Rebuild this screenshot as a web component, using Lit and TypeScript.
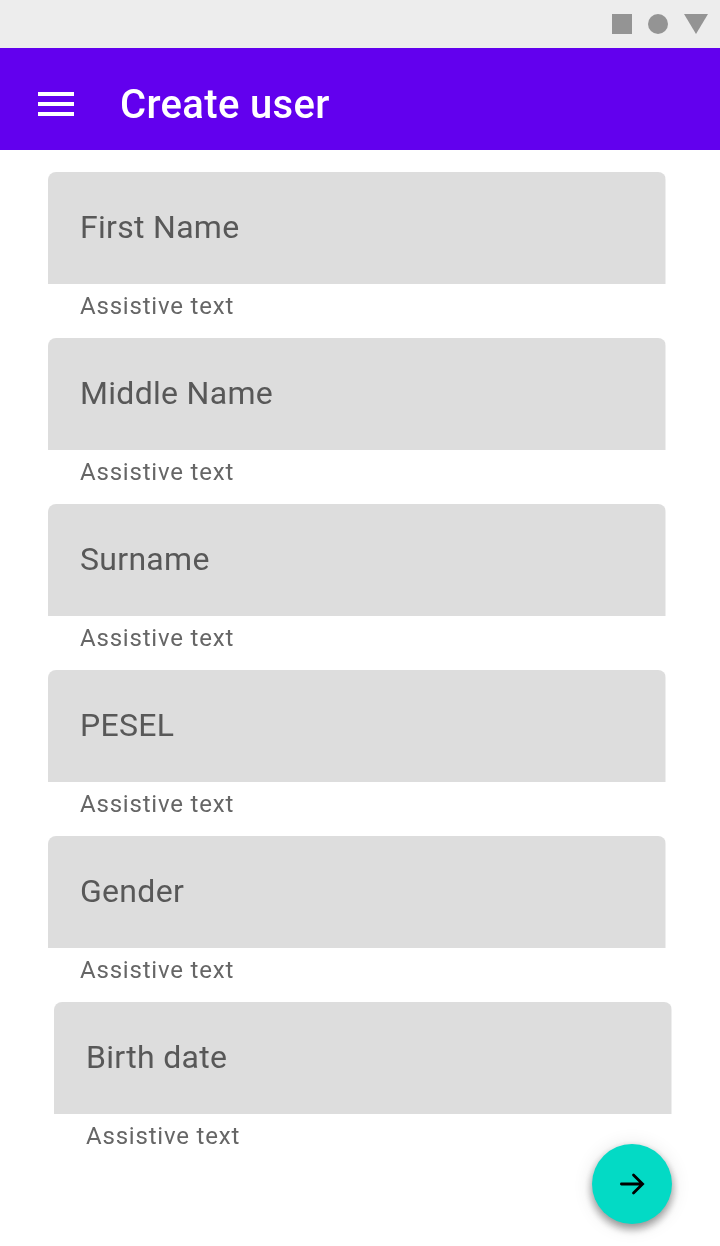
import { LitElement, html, css } from "lit";
import { customElement, property } from "lit/decorators.js";

@customElement("text-field")
class TextField extends LitElement {
  @property() label = "";
  @property() helper = "";

  static styles = css`
    :host { display: block; width: 618px; height: 166px; }
    .box {
      height: 112px; box-sizing: border-box; padding: 1px 32px 3px;
      display: flex; align-items: center;
      background: linear-gradient(to right, #ddd 617px, #eee 617px);
      border-radius: 8px 8px 0 0;
      font-size: 32px; letter-spacing: 0.3px; color: #585858;
    }
    .helper {
      padding: 6px 32px 0; font-size: 24px; line-height: 32px;
      letter-spacing: 0.8px; color: #666;
    }
    .text { will-change: transform; }
  `;

  render() {
    return html`<div class="box"><span class="text">${this.label}</span></div>
      <div class="helper"><div class="text">${this.helper}</div></div>`;
  }
}

@customElement("app-root")
class AppRoot extends LitElement {
  static styles = css`
    :host {
      display: block; position: relative; width: 720px; height: 1246px;
      overflow: hidden; background: #fff; font-family: Roboto, sans-serif;
    }
    svg { display: block; }
    .status { height: 48px; background: #ededed; display: flex; justify-content: flex-end; }
    .bar {
      height: 102px; box-sizing: border-box; padding: 10px 38px 0; background: #6200ee;
      display: flex; align-items: center; gap: 46px; color: #fff;
    }
    .title {
      font-size: 40px; font-weight: 500; letter-spacing: 0.35px; line-height: 48px;
      padding-top: 2px; will-change: transform;
    }
    .form { padding: 22px 48px 0; }
    .shifted { margin-left: 6px; }
    .fab {
      position: absolute; right: 48px; bottom: 22px; width: 80px; height: 80px;
      display: grid; place-items: center; border: 0; padding: 0; border-radius: 50%;
      background: #03dac5;
      box-shadow: 0 2px 20px rgba(0,0,0,.12), 0 5px 10px rgba(0,0,0,.24), 0 4px 8px rgba(0,0,0,.2);
    }
  `;

  render() {
    const fields = ["First Name", "Middle Name", "Surname", "PESEL", "Gender"];
    return html`
      <div class="status">
        <svg width="120" height="48" fill="#949494">
          <path d="M12 14h20v20H12z" /><circle cx="58" cy="24" r="10" /><path d="M84 14h24L96 34z" />
        </svg>
      </div>
      <div class="bar">
        <svg width="36" height="24" fill="#fff"><path d="M0 0h36v4H0zM0 10h36v4H0zM0 20h36v4H0z" /></svg>
        <div class="title">Create user</div>
      </div>
      <div class="form">
        ${fields.map((f) => html`<text-field label=${f} helper="Assistive text"></text-field>`)}
        <text-field class="shifted" label="Birth date" helper="Assistive text"></text-field>
      </div>
      <button class="fab" aria-label="Next">
        <svg width="26" height="24" viewBox="0 0 26 24" fill="none" stroke="#000" stroke-width="2.8" stroke-linecap="round">
          <path d="M2.4 12h20.6M14.5 2.9l9.1 9.1-9.1 9.1" />
        </svg>
      </button>
    `;
  }
}
